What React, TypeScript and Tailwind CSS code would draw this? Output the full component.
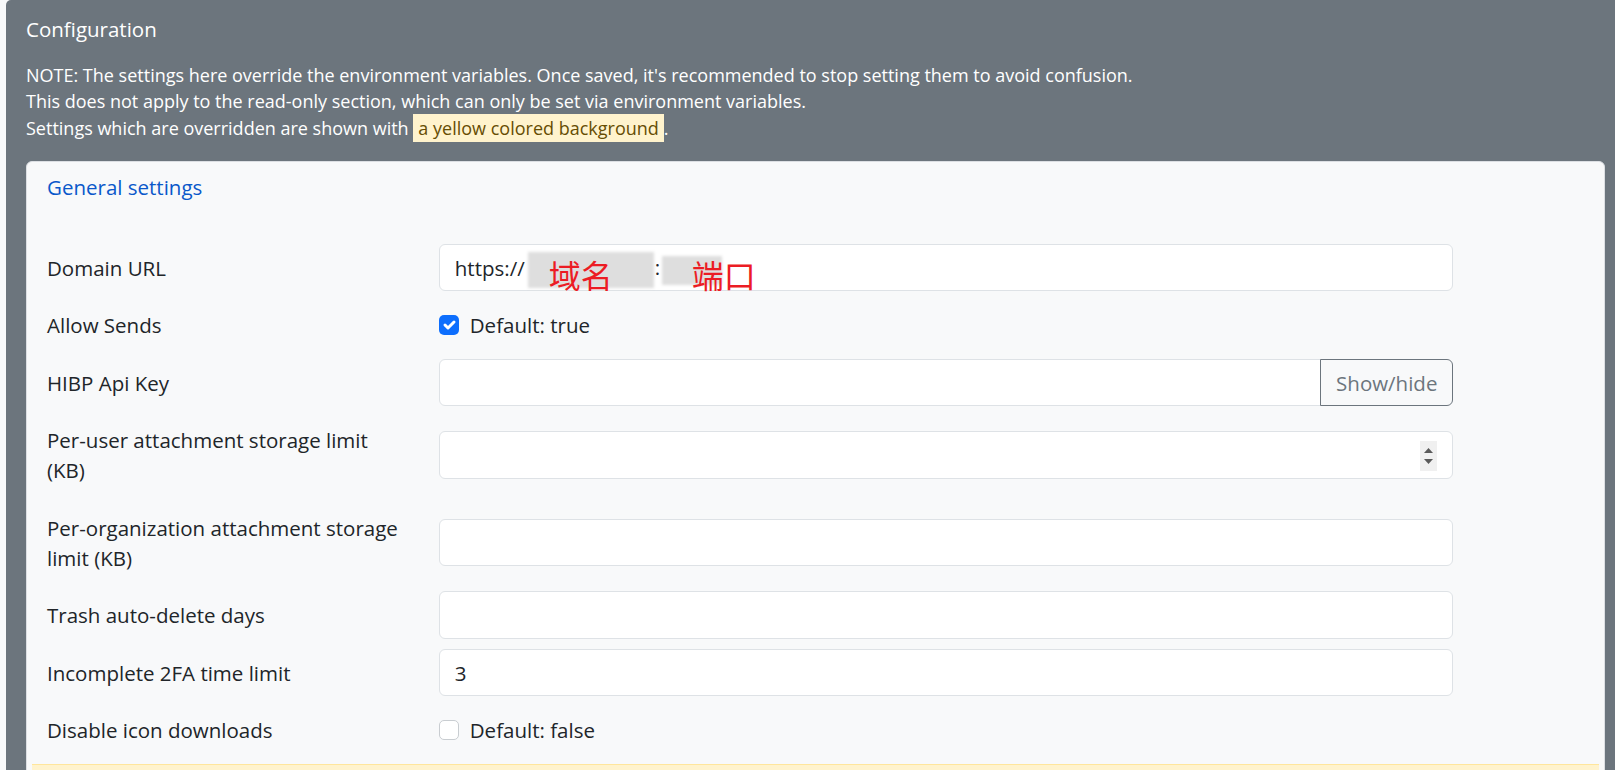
import React from "react";

type Row = {
  label: string;
  kind: "domain" | "check" | "password" | "number" | "text";
  value?: string;
  checked?: boolean;
  def?: string;
};

const rows: Row[] = [
  { label: "Domain URL", kind: "domain" },
  { label: "Allow Sends", kind: "check", checked: true, def: "true" },
  { label: "HIBP Api Key", kind: "password" },
  { label: "Per-user attachment storage limit (KB)", kind: "number" },
  { label: "Per-organization attachment storage limit (KB)", kind: "text" },
  { label: "Trash auto-delete days", kind: "text" },
  { label: "Incomplete 2FA time limit", kind: "text", value: "3" },
  { label: "Disable icon downloads", kind: "check", checked: false, def: "false" },
];

const inputCls =
  "h-[47.5px] w-full bg-white border border-[#dee2e6] px-[15px] text-[20.5px] leading-[30px] text-[#212529] outline-none";

function Checkbox({ checked }: { checked?: boolean }) {
  if (checked) {
    return (
      <span className="flex h-[20px] w-[20px] flex-none items-center justify-center rounded-[5px] bg-[#0d6efd]">
        <svg width="20" height="20" viewBox="0 0 20 20">
          <path d="m6 10 3 3 6-6" fill="none" stroke="#fff" strokeWidth="3" strokeLinecap="round" strokeLinejoin="round" />
        </svg>
      </span>
    );
  }
  return <span className="h-[20px] w-[20px] flex-none rounded-[5px] border border-[#c9cdd1] bg-white" />;
}

function Field({ row }: { row: Row }) {
  if (row.kind === "check") {
    return (
      <div className="flex items-center">
        <Checkbox checked={row.checked} />
        <label className="ml-[11px] text-[20.5px] leading-[30px]">Default: {row.def}</label>
      </div>
    );
  }
  if (row.kind === "domain") {
    return (
      <div className="relative">
        <input readOnly value="https://" className={`${inputCls} rounded-[6px]`} />
        {/* redacted parts of the url */}
        <span className="absolute left-[89px] top-[8px] h-[36px] w-[126px] bg-[#dedede] blur-[1.5px]" />
        <span className="absolute left-[216px] top-[8px] text-[20.5px] leading-[30px] text-[#212529]">:</span>
        <span className="absolute left-[223px] top-[12px] h-[29px] w-[60px] bg-[#dedede] blur-[1.5px]" />
        <span className="absolute left-[110px] top-[14px] font-['Noto_Sans_CJK_SC',sans-serif] text-[32px] leading-none text-[#ec1c24]">
          域名
        </span>
        <span className="absolute left-[253px] top-[14px] font-['Noto_Sans_CJK_SC',sans-serif] text-[32px] leading-none text-[#ec1c24]">
          端口
        </span>
      </div>
    );
  }
  if (row.kind === "password") {
    return (
      <div className="flex">
        <input type="password" readOnly className={`${inputCls} min-w-0 flex-1 rounded-l-[6px]`} />
        <button className="-ml-px h-[47.5px] flex-none rounded-r-[6px] border border-[#6c757d] px-[15px] text-[20.5px] leading-[30px] text-[#6c757d]">
          Show/hide
        </button>
      </div>
    );
  }
  if (row.kind === "number") {
    return (
      <div className="relative">
        <input readOnly className={`${inputCls} rounded-[6px]`} />
        <span className="absolute right-[16px] top-[10px] flex h-[30px] w-[17px] flex-col items-center justify-center gap-[6px] bg-[#f0f0f0]">
          <svg width="9" height="5" viewBox="0 0 9 5">
            <path d="M0 5 4.5 0 9 5z" fill="#5a5a5a" />
          </svg>
          <svg width="9" height="5" viewBox="0 0 9 5">
            <path d="M0 0h9L4.5 5z" fill="#5a5a5a" />
          </svg>
        </span>
      </div>
    );
  }
  return <input readOnly value={row.value ?? ""} className={`${inputCls} rounded-[6px]`} />;
}

export default function App() {
  return (
    <div className="h-[770px] overflow-hidden bg-[#f8f9fa] pl-[6px] font-['Open_Sans','Noto_Sans_CJK_SC',sans-serif]">
      <div className="min-h-full rounded-tl-[5px] bg-[#6c757d] pl-[20px] pr-[10px] pt-[17px] text-white">
        <h6 className="mb-[10px] pb-[11px] text-[20.5px] font-medium leading-[24px]">Configuration</h6>
        <div className="mb-[20px] text-[18px] leading-[26.25px]">
          NOTE: The settings here override the environment variables. Once saved, it's recommended to stop setting them to avoid confusion.
          <br />
          This does not apply to the read-only section, which can only be set via environment variables.
          <br />
          Settings which are overridden are shown with{" "}
          <span className="bg-[#fff3cd] px-[5px] py-[2px] text-[#664d03]">a yellow colored background</span>.
        </div>

        <div className="rounded-[6px] border border-[#dcdfe3] bg-[#f8f9fa] text-[#212529]">
          <div className="px-[20px] py-[10px] text-[20.5px] leading-[30px] text-[#0a58ca]">General settings</div>
          <div className="flex flex-col gap-[10px] px-[20px] pb-[20px] pt-[32px]">
            {rows.map((row) => (
              <div key={row.label} className="-mx-[15px] flex items-center">
                <div className="w-[25%] flex-none px-[15px] py-[8.75px] text-[20.5px] leading-[30px]">{row.label}</div>
                <div className="w-[66.667%] flex-none px-[15px]">
                  <Field row={row} />
                </div>
              </div>
            ))}
            {/* next setting is overridden: only the top of its yellow row is in view */}
            <div className="-mx-[15px] h-[47.5px] border-t border-[#ffe69c] bg-[#fff3cd]" />
          </div>
        </div>
      </div>
    </div>
  );
}
